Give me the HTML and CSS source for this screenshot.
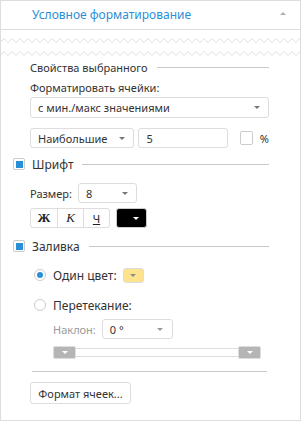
FILE: index.html
```html
<!DOCTYPE html>
<html lang="ru">
<head>
    <meta charset="UTF-8">
    <title>Условное форматирование</title>
    <link rel="stylesheet" href="styles.css">
</head>
<body>
    <div class="panel">
        <!-- Заголовок -->
        <div class="panel-header">
            <span class="panel-title">Условное форматирование</span>
            <span class="collapse-arrow"></span>
        </div>

        <!-- Разрыв -->
        <div class="tear">
            <svg width="301" height="27" viewBox="0 0 301 27">
                <polyline id="zig" fill="none" stroke="#d4d4d4" stroke-width="1" stroke-dasharray="1.5 0.6"
                    points="0,12.5 4,8.5 8,12.5 12,8.5 16,12.5 20,8.5 24,12.5 28,8.5 32,12.5 36,8.5 40,12.5 44,8.5 48,12.5 52,8.5 56,12.5 60,8.5 64,12.5 68,8.5 72,12.5 76,8.5 80,12.5 84,8.5 88,12.5 92,8.5 96,12.5 100,8.5 104,12.5 108,8.5 112,12.5 116,8.5 120,12.5 124,8.5 128,12.5 132,8.5 136,12.5 140,8.5 144,12.5 148,8.5 152,12.5 156,8.5 160,12.5 164,8.5 168,12.5 172,8.5 176,12.5 180,8.5 184,12.5 188,8.5 192,12.5 196,8.5 200,12.5 204,8.5 208,12.5 212,8.5 216,12.5 220,8.5 224,12.5 228,8.5 232,12.5 236,8.5 240,12.5 244,8.5 248,12.5 252,8.5 256,12.5 260,8.5 264,12.5 268,8.5 272,12.5 276,8.5 280,12.5 284,8.5 288,12.5 292,8.5 296,12.5 300,8.5 304,12.5"/>
                <use href="#zig" y="13"/>
            </svg>
        </div>

        <div class="panel-body">
            <div class="section-title">
                <span>Свойства выбранного</span>
                <span class="rule"></span>
            </div>

            <div class="field-label">Форматировать ячейки:</div>
            <div class="select select-wide">
                <span>с мин./макс значениями</span>
                <span class="arrow"></span>
            </div>

            <div class="row row-top">
                <div class="select select-top">
                    <span>Наибольшие</span>
                    <span class="arrow"></span>
                </div>
                <div class="input input-count">5</div>
                <span class="checkbox"></span>
                <span class="percent">%</span>
            </div>

            <!-- Шрифт -->
            <div class="group-title group-font">
                <span class="checkbox checked"></span>
                <span>Шрифт</span>
                <span class="rule"></span>
            </div>

            <div class="row row-size">
                <span class="field-name">Размер:</span>
                <div class="select select-size">
                    <span>8</span>
                    <span class="arrow"></span>
                </div>
            </div>

            <div class="row row-style">
                <div class="btn-group">
                    <span class="style-btn bold">Ж</span>
                    <span class="style-btn italic">К</span>
                    <span class="style-btn underline">Ч</span>
                </div>
                <span class="color-btn color-black"><span class="arrow"></span></span>
            </div>

            <!-- Заливка -->
            <div class="group-title group-fill">
                <span class="checkbox checked"></span>
                <span>Заливка</span>
                <span class="rule"></span>
            </div>

            <div class="radio-row radio-solid">
                <span class="radio checked"></span>
                <span>Один цвет:</span>
                <span class="color-btn color-yellow"><span class="arrow"></span></span>
            </div>

            <div class="radio-row radio-gradient">
                <span class="radio"></span>
                <span>Перетекание:</span>
            </div>

            <div class="row row-angle">
                <span class="field-name disabled">Наклон:</span>
                <div class="select select-angle">
                    <span>0 °</span>
                    <span class="arrow"></span>
                </div>
            </div>

            <div class="slider">
                <span class="handle"><span class="arrow"></span></span>
                <span class="track"></span>
                <span class="handle"><span class="arrow"></span></span>
            </div>

            <div class="divider"></div>

            <span class="btn">Формат ячеек...</span>
        </div>
    </div>
</body>
</html>
```

FILE: styles.css
```css
:root {
    --text-color: #333333;
    --text-disabled: #9a9a9a;
    --accent: #2b8fd8;
    --border: #dddddd;
    --rule: #c8c8c8;
    --radius: 3px;
}

* {
    margin: 0;
    padding: 0;
    box-sizing: border-box;
}

body {
    font-family: 'Noto Sans', 'Open Sans', sans-serif;
    font-size: 11px;
    color: var(--text-color);
    background: #ffffff;
}

.panel {
    width: 301px;
    height: 421px;
    border: 1px solid var(--border);
    overflow: hidden;
}

/* Заголовок */
.panel-header {
    height: 29px;
    border-bottom: 1px solid var(--border);
    display: flex;
    align-items: center;
    padding: 0 14px 0 31px;
}

.panel-title {
    flex: 1;
    color: var(--accent);
    font-size: 12px;
    padding-bottom: 2px;
}

.collapse-arrow {
    width: 0;
    height: 0;
    border-left: 3px solid transparent;
    border-right: 3px solid transparent;
    border-bottom: 3px solid #b0b0b0;
    margin-bottom: 3px;
}

.tear {
    height: 27px;
}

.tear svg {
    display: block;
    margin-left: -1px;
}

/* Основная часть */
.panel-body {
    padding: 0 31px 0 29px;
}

.section-title {
    height: 20px;
    display: flex;
    align-items: center;
}

.rule {
    flex: 1;
    height: 1px;
    background: var(--rule);
    margin-left: 9px;
}

.field-label {
    height: 18px;
    margin-top: 2px;
    line-height: 18px;
}

.select,
.input {
    height: 21px;
    border: 1px solid var(--border);
    border-radius: var(--radius);
    display: flex;
    align-items: center;
    padding: 0 8px 0 7px;
}

.select span:first-child {
    flex: 1;
}

.arrow {
    width: 0;
    height: 0;
    border-left: 3px solid transparent;
    border-right: 3px solid transparent;
    border-top: 3px solid #777777;
}

.row {
    display: flex;
    align-items: center;
}

.row-top {
    margin-top: 10px;
    height: 20px;
}

.select-top {
    width: 105px;
    height: 20px;
}

.input-count {
    width: 90px;
    height: 20px;
    margin-left: 4px;
}

.checkbox {
    width: 12px;
    height: 12px;
    border: 1px solid #cccccc;
    border-radius: 2px;
    display: flex;
    align-items: center;
    justify-content: center;
    flex-shrink: 0;
}

.row-top .checkbox {
    width: 13px;
    height: 14px;
    margin-left: 12px;
}

.checkbox.checked::after {
    content: '';
    width: 7px;
    height: 7px;
    background: var(--accent);
}

.percent {
    margin-left: 7px;
}

/* Группы */
.group-title {
    height: 16px;
    display: flex;
    align-items: center;
    margin-left: -17px;
    font-size: 12px;
}

.group-title .checkbox {
    margin-right: 7px;
}

.group-font {
    margin-top: 8px;
}

.group-fill {
    margin-top: 10px;
}

.row-size {
    margin-top: 11px;
    height: 20px;
}

.field-name {
    margin-right: 6px;
}

.field-name.disabled {
    color: var(--text-disabled);
}

.select-size {
    width: 59px;
    height: 20px;
}

.row-style {
    margin-top: 5px;
    height: 20px;
}

.btn-group {
    display: flex;
    height: 20px;
    border: 1px solid var(--border);
    border-radius: var(--radius);
}

.style-btn {
    width: 26px;
    display: flex;
    align-items: center;
    justify-content: center;
    font-family: 'Liberation Serif', serif;
    font-size: 13px;
    color: #222222;
}

.style-btn + .style-btn {
    border-left: 1px solid var(--border);
}

.style-btn.bold {
    font-weight: bold;
}

.style-btn.italic {
    font-style: italic;
}

.style-btn.underline {
    font-family: 'Noto Sans', sans-serif;
    font-size: 11px;
    text-decoration: underline;
}

.color-btn {
    display: flex;
    align-items: center;
    justify-content: center;
    border: 1px solid var(--border);
    border-radius: var(--radius);
}

.color-black {
    width: 31px;
    height: 20px;
    margin-left: 6px;
    background: #000000;
    border-color: #cccccc;
    padding-left: 8px;
}

.color-black .arrow {
    border-top-color: #ffffff;
}

.color-yellow {
    width: 21px;
    height: 15px;
    margin-left: 6px;
    background: #fde38e;
}

.color-yellow .arrow {
    border-top-color: #8a8a8a;
}

/* Радиокнопки */
.radio-row {
    height: 16px;
    display: flex;
    align-items: center;
    font-size: 12px;
    margin-left: 4px;
}

.radio {
    width: 12px;
    height: 12px;
    border: 1px solid #cccccc;
    border-radius: 50%;
    margin-right: 7px;
    display: flex;
    align-items: center;
    justify-content: center;
}

.radio.checked::after {
    content: '';
    width: 6px;
    height: 6px;
    border-radius: 50%;
    background: var(--accent);
}

.radio-solid {
    margin-top: 13px;
}

.radio-gradient {
    margin-top: 14px;
}

.row-angle {
    margin-top: 6px;
    margin-left: 23px;
    height: 20px;
}

.select-angle {
    width: 71px;
    height: 20px;
    padding-right: 9px;
}

.select-angle .arrow {
    border-top-color: #999999;
}

.slider {
    margin-top: 7px;
    margin-left: 23px;
    width: 208px;
    height: 13px;
    display: flex;
    align-items: center;
}

.handle {
    width: 23px;
    height: 13px;
    background: #b5b5b5;
    border: 1px solid #dddddd;
    border-radius: 2px;
    display: flex;
    align-items: center;
    justify-content: center;
    flex-shrink: 0;
}

.handle .arrow {
    border-top-color: #ffffff;
}

.track {
    flex: 1;
    height: 9px;
    border: 1px solid var(--border);
    border-left: none;
    border-right: none;
}

.divider {
    height: 1px;
    background: var(--rule);
    margin: 12px 2px 0 2px;
}

.btn {
    display: inline-flex;
    align-items: center;
    justify-content: center;
    width: 101px;
    height: 22px;
    margin-top: 10px;
    border: 1px solid var(--border);
    border-radius: var(--radius);
}
```
